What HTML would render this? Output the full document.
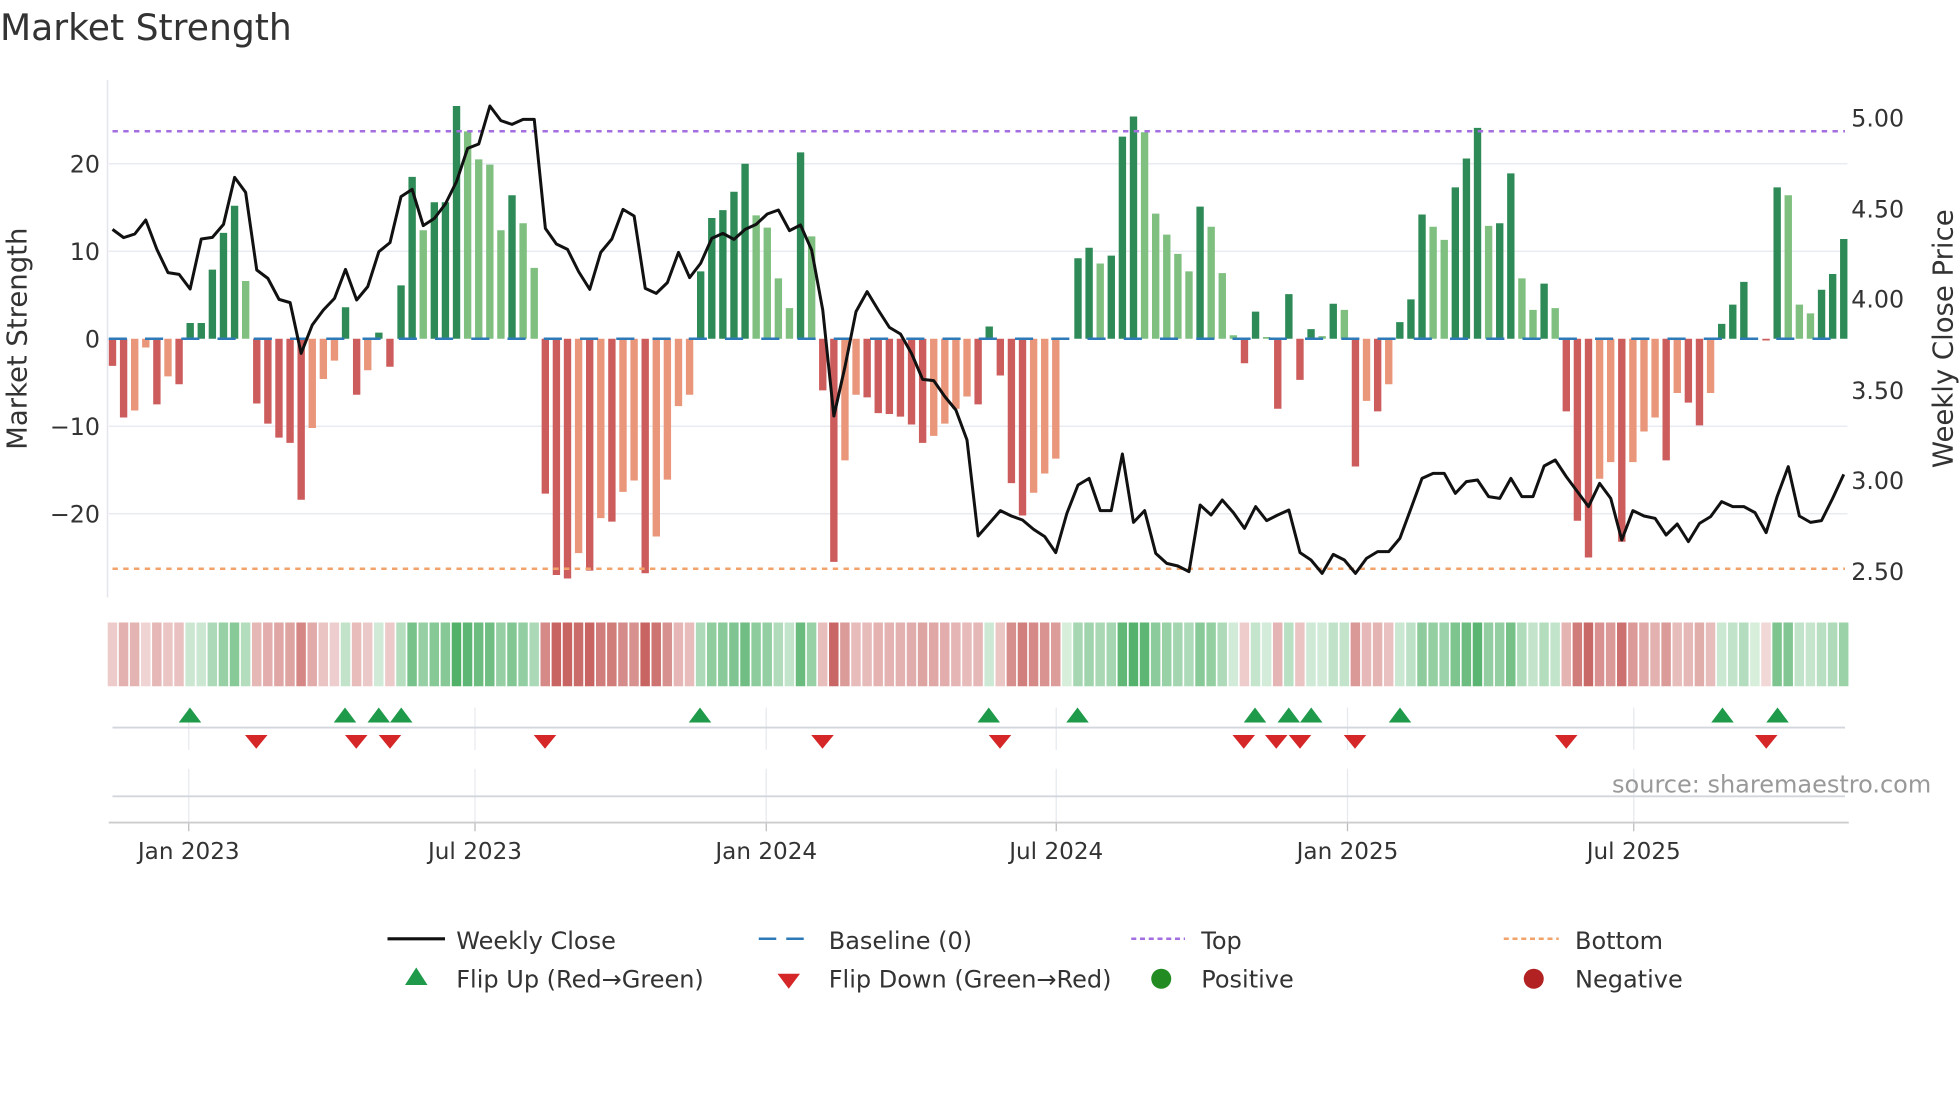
<!DOCTYPE html>
<html><head><meta charset="utf-8">
<style>
html,body{margin:0;padding:0;background:#fff;width:1960px;height:1102px;overflow:hidden}
svg{display:block}
text{font-family:"DejaVu Sans","Liberation Sans",sans-serif;fill:#333}
</style></head>
<body>
<svg id="s" width="1960" height="1102" viewBox="0 0 1568 881.6" xmlns="http://www.w3.org/2000/svg">
<rect width="1568" height="882" fill="#fff"/>
<text x="0" y="32" font-size="28.9" fill="#333">Market Strength</text>
<g id="grid"></g>
<g id="bars"></g>
<g id="lines"></g>
<g id="strip"></g>
<g id="marks"></g>
<g font-size="19">
<text x="80" y="138" text-anchor="end">20</text>
<text x="80" y="208" text-anchor="end">10</text>
<text x="80" y="278" text-anchor="end">0</text>
<text x="80" y="348" text-anchor="end">−10</text>
<text x="80" y="418" text-anchor="end">−20</text>
<text x="1481" y="101">5.00</text>
<text x="1481" y="174">4.50</text>
<text x="1481" y="246">4.00</text>
<text x="1481" y="319">3.50</text>
<text x="1481" y="391">3.00</text>
<text x="1481" y="464">2.50</text>
</g>
<text font-size="22" transform="translate(21,271) rotate(-90)" text-anchor="middle">Market Strength</text>
<text font-size="22" transform="translate(1562,271) rotate(-90)" text-anchor="middle">Weekly Close Price</text>
<g font-size="18.5" text-anchor="middle">
<text x="151" y="687">Jan 2023</text>
<text x="380" y="687">Jul 2023</text>
<text x="613" y="687">Jan 2024</text>
<text x="845" y="687">Jul 2024</text>
<text x="1078" y="687">Jan 2025</text>
<text x="1307" y="687">Jul 2025</text>
</g>
<text x="1545" y="634" font-size="19.2" text-anchor="end" style="fill:#999">source: sharemaestro.com</text>
<g font-size="19.2">
<line x1="310" y1="751" x2="356" y2="751" stroke="#111" stroke-width="2.5"/>
<text x="365" y="759">Weekly Close</text>
<line x1="607" y1="751" x2="651" y2="751" stroke="#2e7ab8" stroke-width="2" stroke-dasharray="14,8"/>
<text x="663" y="759">Baseline (0)</text>
<line x1="905" y1="751" x2="948" y2="751" stroke="#a56ee0" stroke-width="2" stroke-dasharray="4,3"/>
<text x="961" y="759">Top</text>
<line x1="1203" y1="751" x2="1247" y2="751" stroke="#f2a36b" stroke-width="2" stroke-dasharray="4,3"/>
<text x="1260" y="759">Bottom</text>
<polygon points="333,774 342,788 324,788" fill="#1e9a4a"/>
<text x="365" y="790">Flip Up (Red→Green)</text>
<polygon points="622,779 640,779 631,791" fill="#d62728"/>
<text x="663" y="790">Flip Down (Green→Red)</text>
<circle cx="929" cy="783" r="8" fill="#228b22"/>
<text x="961" y="790">Positive</text>
<circle cx="1227" cy="783" r="8" fill="#b22222"/>
<text x="1260" y="790">Negative</text>
</g>
</svg>
<script>
var NS="http://www.w3.org/2000/svg";
function el(p,t,a){var e=document.createElementNS(NS,t);for(var k in a)e.setAttribute(k,a[k]);document.getElementById(p).appendChild(e);return e;}
var V="-3.1d -9d -8.2l -1l -7.5d -4.3l -5.2d 1.8d 1.8d 7.9d 12.1d 15.2d 6.6l -7.4d -9.7d -11.3d -11.9d -18.4d -10.2l -4.6l -2.5l 3.6d -6.4d -3.6l 0.7d -3.2d 6.1d 18.5d 12.4l 15.6d 15.6d 26.6d 23.7l 20.5l 19.9l 12.4l 16.4d 13.2l 8.1l -17.7d -27d -27.4d -24.5l -26.5d -20.5l -20.9d -17.5l -16.2l -26.8d -22.6l -16.1l -7.7l -6.4l 7.7d 13.8d 14.7d 16.8d 20d 14.1l 12.7l 6.9l 3.5l 21.3d 11.7l -5.9d -25.5d -13.9l -6.4l -6.7d -8.5d -8.6d -8.9d -9.8d -11.9d -11.1l -9.7l -8l -6.6l -7.5d 1.4d -4.2d -16.5d -20.2d -17.6l -15.4l -13.7l 0d 9.2d 10.4d 8.6l 9.5d 23.1d 25.4d 23.6l 14.3l 11.9l 9.7l 7.7l 15.1d 12.8l 7.5l 0.4l -2.8d 3.1d 0.2l -8d 5.1d -4.7d 1.1d 0.3l 4d 3.3l -14.6d -7.1l -8.3d -5.2l 1.9d 4.5d 14.2d 12.8l 11.3l 17.3d 20.6d 24.1d 12.9l 13.2d 18.9d 6.9l 3.3l 6.3d 3.5l -8.3d -20.8d -25d -16l -14.1l -23.2d -14.1l -10.6l -9l -13.9d -6.2l -7.3d -9.9d -6.2l 1.7d 3.9d 6.5d 0d -0.2d 17.3d 16.4l 3.9l 2.9l 5.6d 7.4d 11.4d".split(" ");
var P=[418,443,432,390,478,548,553,597,447,442,403,262,307,540,565,628,638,790,705,660,625,538,630,590,485,458,320,298,407,385,342,275,175,162,48,92,103,88,88,415,462,
478,545,598,487,447,358,378,595,610,578,487,563,520,445,430,448,418,403,372,360,422,405,480,660,978,830,665,605,660,712,732,790,868,872,920,960,1050,1338,1300,1262,
1278,1290,1318,1340,1388,1270,1185,1165,1262,1262,1092,1297,1262,1390,1420,1428,1445,1245,1275,1230,1268,1315,1250,1292,1275,1260,1388,1410,1450,1393,1410,1450,1405,1385,1385,1345,1255,
1165,1150,1150,1210,1175,1170,1220,1225,1165,1220,1220,1128,1110,1160,1205,1250,1180,1225,1350,1262,1278,1285,1335,1302,1355,1300,1280,1235,1250,1250,1268,1328,1220,1130,1278,1297,1292,1225,1153];
var N=V.length,x0=90,dx=(1475-90)/156;
function X(i){return x0+i*dx;}
[131,201,341,411].forEach(function(y){el("grid","line",{x1:87,x2:1478,y1:y,y2:y,stroke:"#e8ecf2","stroke-width":1.2});});
el("grid","line",{x1:86,x2:86,y1:64,y2:478,stroke:"#e3e6ec","stroke-width":1.2});
[151,380,613,845,1078,1307].forEach(function(x){
 el("grid","line",{x1:x,x2:x,y1:566,y2:600,stroke:"#e6e9ef","stroke-width":1});
 el("grid","line",{x1:x,x2:x,y1:615,y2:658,stroke:"#e6e9ef","stroke-width":1});
 el("grid","line",{x1:x,x2:x,y1:658,y2:665,stroke:"#bbb","stroke-width":1});
});
el("grid","line",{x1:90,x2:1476,y1:582,y2:582,stroke:"#d3d6dc","stroke-width":1.5});
el("grid","line",{x1:90,x2:1476,y1:637,y2:637,stroke:"#d3d6dc","stroke-width":1.5});
el("grid","line",{x1:87,x2:1479,y1:658,y2:658,stroke:"#ccc","stroke-width":1.5});
var bw=5.9;
for(var i=0;i<N;i++){
 var v=parseFloat(V[i]),f=V[i].slice(-1);
 var m=Math.min(1,Math.abs(v)/26);var a=0.22+0.66*m;
 var base=v>=0?[58,166,85]:[192,80,77];
 var col=v===0?"#d7eedb":"rgb("+base.map(function(b){return Math.round(255-(255-b)*a);}).join(",")+")";
 el("strip","rect",{x:X(i)-dx/2+0.6,y:498,width:dx-1.3,height:51,fill:col});
 if(v===0)continue;
 var c=v>0?(f=="d"?"#2e8b57":"#7fbf7f"):(f=="d"?"#cd5c5c":"#e9967a");
 var y=271-v*7;
 el("bars","rect",{x:X(i)-bw/2,y:Math.min(y,271),width:bw,height:Math.max(Math.abs(v*7),0.8),fill:c});
}
el("lines","line",{x1:87,x2:1478,y1:271,y2:271,stroke:"#2e7ab8","stroke-width":2,"stroke-dasharray":"14.5,14.5"});
el("lines","line",{x1:90,x2:1476,y1:105,y2:105,stroke:"#a56ee0","stroke-width":2,"stroke-dasharray":"4.3,4.3"});
el("lines","line",{x1:90,x2:1476,y1:455,y2:455,stroke:"#f2a36b","stroke-width":2,"stroke-dasharray":"4.3,4.3"});
var pts=P.map(function(z,i){return X(i).toFixed(1)+","+((z/3+90)/1.25).toFixed(1);}).join(" ");
el("lines","polyline",{points:pts,fill:"none",stroke:"#111","stroke-width":2.4,"stroke-linejoin":"round"});
[152,276,303,321,560,791,862,1004,1031,1049,1120,1378,1422].forEach(function(x){el("marks","polygon",{points:(x)+",566 "+(x+9)+",578 "+(x-9)+",578",fill:"#1e9a4a"});});
[205,285,312,436,658,800,995,1021,1040,1084,1253,1413].forEach(function(x){el("marks","polygon",{points:(x-9)+",588 "+(x+9)+",588 "+x+",599",fill:"#d62728"});});
</script>
</body></html>
